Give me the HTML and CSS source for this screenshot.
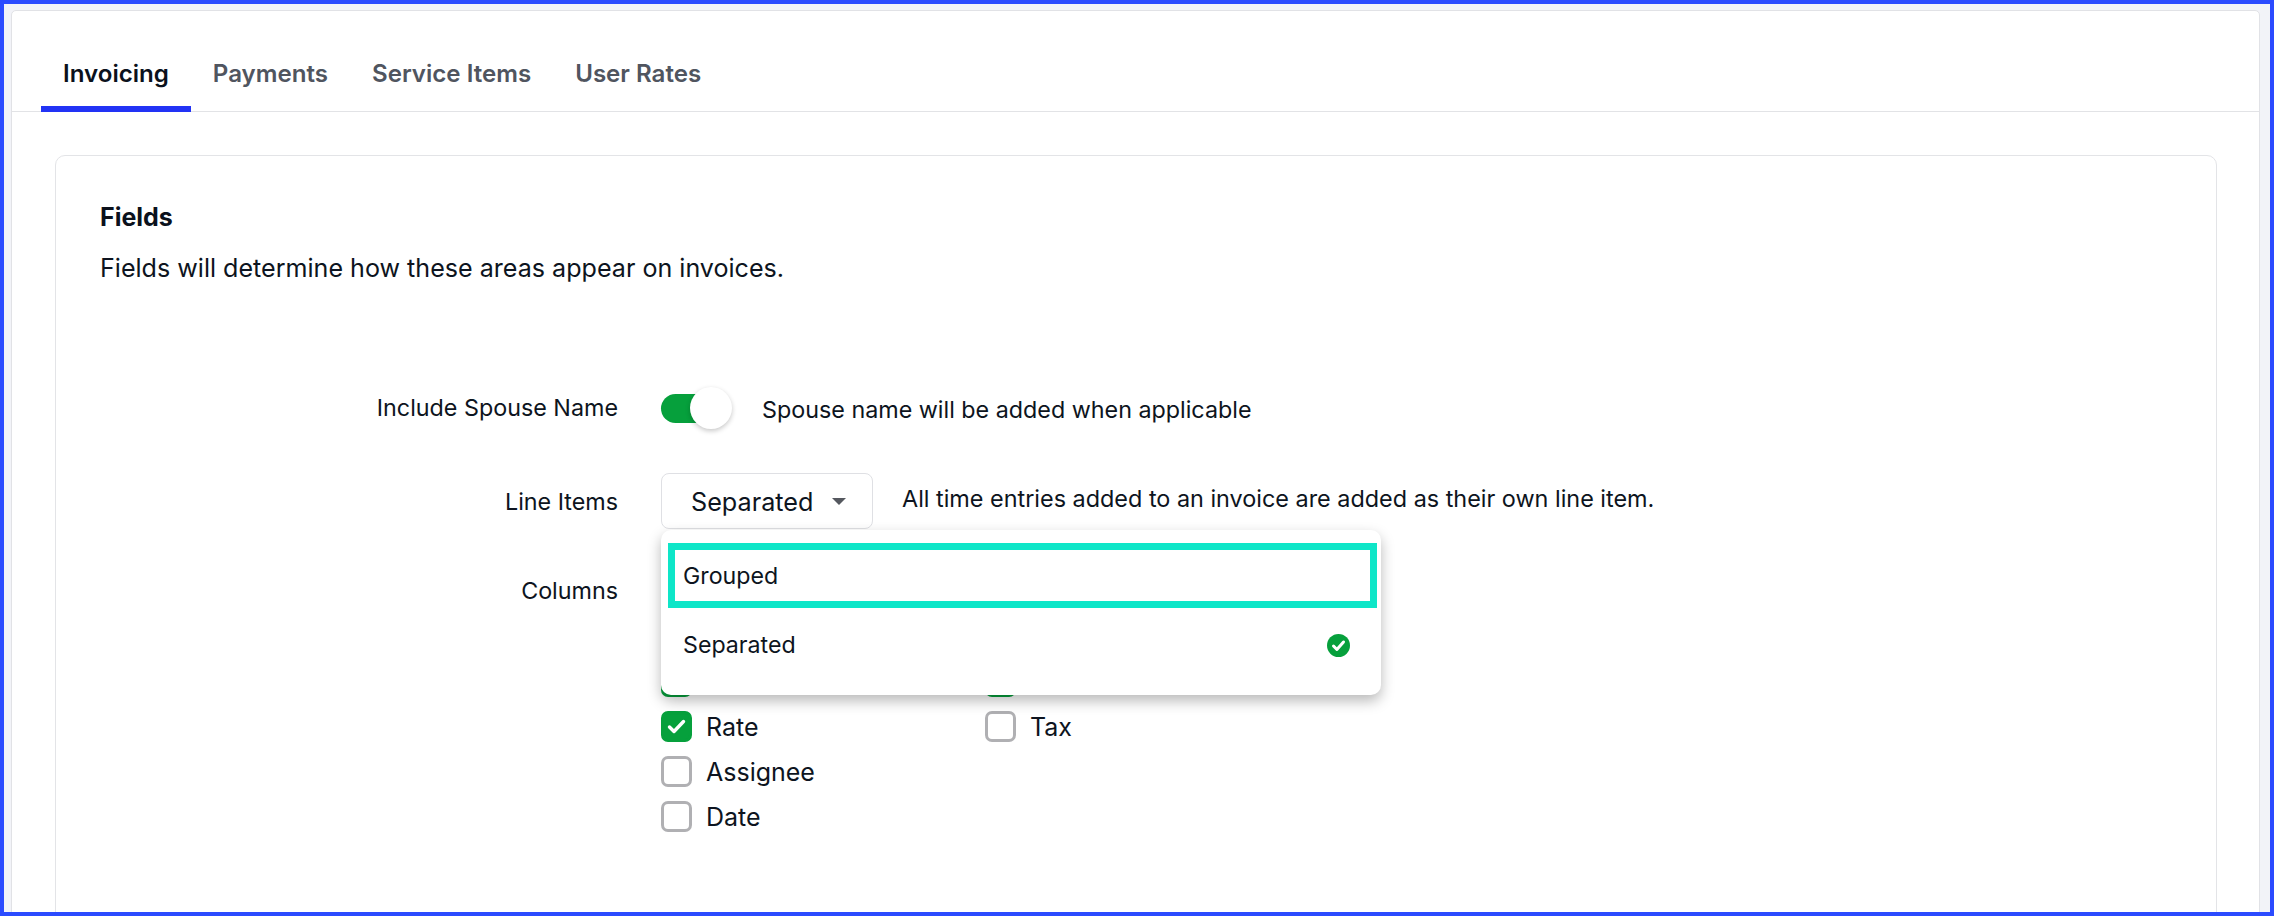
FILE: index.html
```html
<!DOCTYPE html>
<html lang="en">
<head>
<meta charset="utf-8">
<title>Invoicing settings</title>
<link rel="stylesheet" href="styles.css">
</head>
<body>
<main class="panel">
  <nav class="tabs">
    <a class="tab active">Invoicing</a>
    <a class="tab">Payments</a>
    <a class="tab">Service Items</a>
    <a class="tab">User Rates</a>
  </nav>
  <div class="content">
    <section class="card">
      <h2 class="card-title">Fields</h2>
      <p class="card-desc">Fields will determine how these areas appear on invoices.</p>
      <div class="form">
        <div class="row row-toggle">
          <div class="label">Include Spouse Name</div>
          <div class="control">
            <span class="toggle"><span class="knob"></span></span>
            <span class="hint hint-toggle">Spouse name will be added when applicable</span>
          </div>
        </div>
        <div class="row row-select">
          <div class="label label-select">Line Items</div>
          <div class="control">
            <div class="select-wrap">
              <button class="select"><span class="select-text">Separated</span><svg class="caret" width="14" height="7" viewBox="0 0 14 7"><path d="M0 0h14L7 7z" fill="#55585f"/></svg></button>
              <div class="menu">
                <div class="option option-marked"><span class="option-text">Grouped</span></div>
                <div class="option">Separated
                  <svg class="tick" width="23" height="23" viewBox="0 0 23 23"><circle cx="11.5" cy="11.5" r="11.5" fill="#06a03c"/><path d="M6.5 12l3.4 3.5 6.6-7.5" fill="none" stroke="#fff" stroke-width="3" stroke-linecap="round" stroke-linejoin="round"/></svg>
                </div>
              </div>
            </div>
            <span class="hint hint-select">All time entries added to an invoice are added as their own line item.</span>
          </div>
        </div>
        <div class="row row-columns">
          <div class="label">Columns</div>
          <div class="control checks">
            <div class="check-col">
              <span class="check check-hidden"><span class="box on"></span></span>
              <span class="check check-hidden"><span class="box on"></span></span>
              <span class="check check-hidden"><span class="box on"></span></span>
              <label class="check"><span class="box on"><svg width="19" height="15" viewBox="0 0 19 15"><path d="M2.5 8l4.5 4.5 9.5-10" fill="none" stroke="#fff" stroke-width="3.4" stroke-linecap="round" stroke-linejoin="round"/></svg></span>Rate</label>
              <label class="check"><span class="box"></span>Assignee</label>
              <label class="check"><span class="box"></span>Date</label>
            </div>
            <div class="check-col">
              <span class="check check-hidden"><span class="box on"></span></span>
              <span class="check check-hidden"><span class="box on"></span></span>
              <span class="check check-hidden"><span class="box on"></span></span>
              <label class="check"><span class="box"></span>Tax</label>
            </div>
          </div>
        </div>
      </div>
    </section>
  </div>
</main>
</body>
</html>
```
FILE: styles.css
```css
* { box-sizing: border-box; }
html, body { margin: 0; height: 100%; }
body {
  height: 100vh;
  overflow: hidden;
  border: 4px solid #2b4bff;
  background: #f2f3f8;
  padding: 6px 10px 0 7px;
  font-family: Inter, "Liberation Sans", sans-serif;
  color: #0d1420;
}
.panel {
  height: 940px;
  background: #fff;
  border: 1px solid #e1e2e6;
  border-radius: 5px;
}
.tabs {
  display: flex;
  height: 101px;
  padding-left: 29px;
  border-bottom: 1px solid #e2e3e6;
}
.tab {
  height: 101px;
  padding: 48px 22px 0;
  font-size: 24.1px;
  line-height: 30px;
  font-weight: 600;
  color: #50555f;
  border-bottom: 6px solid transparent;
}
.tab.active { color: #0b111c; border-bottom-color: #2233f5; }
.content { padding: 43px 42px 0 43px; }
.card {
  height: 800px;
  border: 1px solid #e3e4e7;
  border-radius: 10px;
  padding: 46px 44px 0;
}
.card-title { margin: 0; font-size: 25px; line-height: 30px; font-weight: 700; color: #0b111c; }
.card-desc { margin: 21px 0 0; font-size: 25.1px; line-height: 30px; }
.form { margin-top: 104px; font-size: 23.3px; line-height: 30px; }
.row { display: grid; grid-template-columns: 518px 1fr; column-gap: 43px; }
.label { text-align: right; }
.label-select { margin-top: 2px; }
.control { display: flex; align-items: center; }
.row-toggle { height: 42px; align-items: center; }
.row-select { height: 56px; margin-top: 44px; align-items: center; }
.row-columns { margin-top: 47px; }
.toggle {
  position: relative;
  width: 59px;
  height: 29px;
  border-radius: 15px;
  background: #06a03c;
}
.knob {
  position: absolute;
  left: 29px;
  top: -7px;
  width: 42px;
  height: 42px;
  border-radius: 50%;
  background: #fff;
  box-shadow: 0 2px 5px rgba(0, 0, 0, .22);
}
.hint-toggle { margin-left: 42px; margin-top: 3px; }
.hint-select { margin-left: 29px; margin-top: -5px; font-size: 23.4px; }
.select-wrap { position: relative; }
.select {
  display: flex;
  align-items: center;
  width: 212px;
  height: 56px;
  padding: 0 0 0 29px;
  background: #fff;
  border: 1px solid #dfe0e4;
  border-radius: 8px;
  font: 400 25.2px/30px Inter, "Liberation Sans", sans-serif;
  color: #0d1420;
}
.select-text { margin-top: 2px; }
.caret { margin-left: 19px; }
.menu {
  position: absolute;
  z-index: 2;
  left: 0;
  top: 57px;
  width: 720px;
  height: 165px;
  background: #fff;
  border-radius: 10px;
  padding-top: 13px;
  box-shadow: 0 6px 14px rgba(0, 0, 0, .28);
}
.option {
  display: flex;
  align-items: center;
  justify-content: space-between;
  height: 50px;
  margin: 0 4px 0 7px;
  padding: 0 27px 0 15px;
  font-size: 23.2px;
}
.option-marked {
  height: 65px;
  margin-bottom: 12px;
  padding-left: 8px;
  border: 7px solid #0ee6c8;
}
.option-text { margin-top: 1px; }
.checks { align-items: flex-start; }
.check-col { display: flex; flex-direction: column; gap: 14px; width: 324px; }
.check { display: flex; align-items: center; height: 31px; gap: 14px; font-size: 25px; }
.box {
  display: flex;
  align-items: center;
  justify-content: center;
  width: 31px;
  height: 31px;
  border: 3px solid #b0b0b3;
  border-radius: 7px;
  background: #fff;
}
.box.on { background: #06a03c; border-color: #06a03c; }
```
